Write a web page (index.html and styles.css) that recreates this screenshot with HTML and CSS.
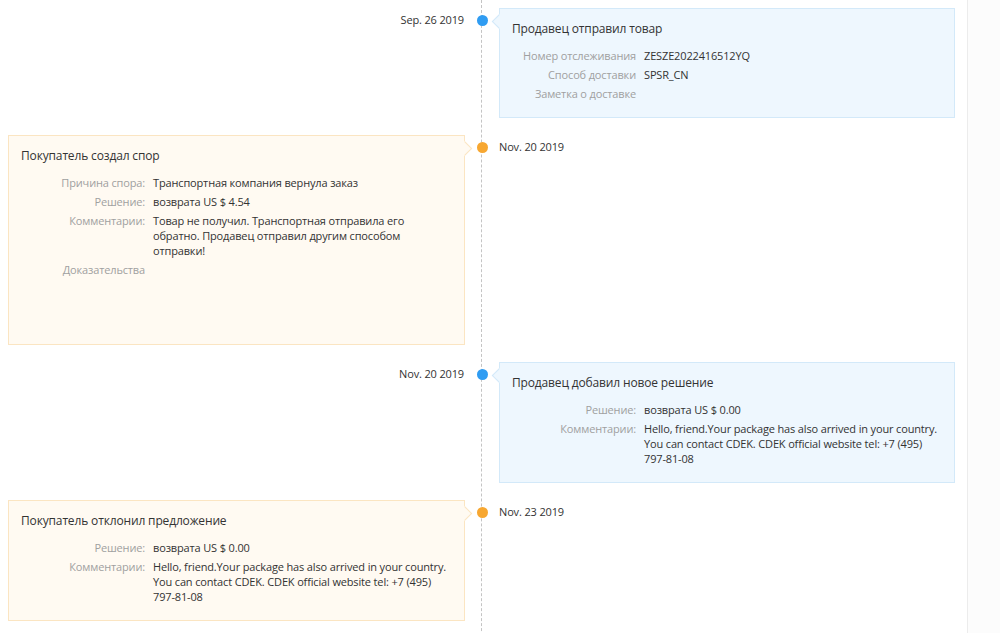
FILE: index.html
```html
<!doctype html>
<html lang="ru">
<head>
    <meta charset="UTF-8">
    <meta name="viewport" content="width=device-width, initial-scale=1.0">
    <title>Спор</title>
    <link rel="stylesheet" href="styles.css">
</head>
<body>
<div class="page">
    <div class="timeline">
        <div class="event seller">
            <div class="event-date date-left">Sep. 26 2019</div>
            <div class="event-axis"><span class="dot"></span></div>
            <div class="card card-right">
                <div class="card-title">Продавец отправил товар</div>
                <div class="row"><span class="label">Номер отслеживания</span><span class="value">ZESZE2022416512YQ</span></div>
                <div class="row"><span class="label">Способ доставки</span><span class="value">SPSR_CN</span></div>
                <div class="row"><span class="label">Заметка о доставке</span><span class="value"></span></div>
            </div>
        </div>

        <div class="event buyer">
            <div class="card card-left">
                <div class="card-title">Покупатель создал спор</div>
                <div class="row"><span class="label">Причина спора:</span><span class="value">Транспортная компания вернула заказ</span></div>
                <div class="row"><span class="label">Решение:</span><span class="value">возврата US $ 4.54</span></div>
                <div class="row"><span class="label">Комментарии:</span><span class="value">Товар не получил. Транспортная отправила его обратно. Продавец отправил другим способом отправки!</span></div>
                <div class="row"><span class="label">Доказательства</span><span class="value proof"></span></div>
            </div>
            <div class="event-axis"><span class="dot"></span></div>
            <div class="event-date">Nov. 20 2019</div>
        </div>

        <div class="event seller">
            <div class="event-date date-left">Nov. 20 2019</div>
            <div class="event-axis"><span class="dot"></span></div>
            <div class="card card-right">
                <div class="card-title">Продавец добавил новое решение</div>
                <div class="row"><span class="label">Решение:</span><span class="value">возврата US $ 0.00</span></div>
                <div class="row"><span class="label">Комментарии:</span><span class="value">Hello, friend.Your package has also arrived in your country. You can contact CDEK. CDEK official website tel: +7 (495) 797-81-08</span></div>
            </div>
        </div>

        <div class="event buyer">
            <div class="card card-left">
                <div class="card-title">Покупатель отклонил предложение</div>
                <div class="row"><span class="label">Решение:</span><span class="value">возврата US $ 0.00</span></div>
                <div class="row"><span class="label">Комментарии:</span><span class="value">Hello, friend.Your package has also arrived in your country. You can contact CDEK. CDEK official website tel: +7 (495) 797-81-08</span></div>
            </div>
            <div class="event-axis"><span class="dot"></span></div>
            <div class="event-date">Nov. 23 2019</div>
        </div>
    </div>
</div>
</body>
</html>
```

FILE: styles.css
```css
* {
    margin: 0;
    padding: 0;
    box-sizing: border-box;
}

html, body {
    height: 100%;
}

body {
    font-family: "Open Sans", "Noto Sans", sans-serif;
    font-size: 11px;
    letter-spacing: -0.15px;
    color: #333;
    background-color: #fcfcfc;
    overflow: hidden;
}

.page {
    width: 968px;
    min-height: 100%;
    background-color: #fff;
    border-right: 1px solid #ececec;
}

.timeline {
    position: relative;
    padding: 8px 0 40px 8px;
    display: flex;
    flex-direction: column;
    gap: 17px;
}

/* dashed axis */
.timeline::before {
    content: "";
    position: absolute;
    top: 0;
    bottom: 0;
    left: 481px;
    border-left: 1px dashed #c4c4c4;
}

.event {
    display: grid;
    grid-template-columns: 457px 34px 456px;
    align-items: start;
}

.event-axis {
    position: relative;
    height: 24px;
    z-index: 1;
}

.dot {
    display: block;
    width: 11px;
    height: 11px;
    border-radius: 50%;
    margin: 7px 0 0 12px;
}

.seller .dot {
    background-color: #2f9cf2;
}

.buyer .dot {
    background-color: #f7a731;
}

.event-date {
    line-height: 24px;
    white-space: nowrap;
}

.date-left {
    text-align: right;
    padding-right: 1px;
}

.card {
    position: relative;
    padding: 12px;
    border: 1px solid;
}

.seller .card {
    background-color: #eef7fe;
    border-color: #d3e9f9;
}

.buyer .card {
    background-color: #fffaf2;
    border-color: #fbe5c2;
}

/* little arrow to the dot */
.card::before {
    content: "";
    position: absolute;
    top: 7px;
    width: 9px;
    height: 9px;
    background: inherit;
    border: 1px solid;
    border-color: inherit;
    transform: rotate(45deg);
}

.card-right::before {
    left: -6px;
    border-top-color: transparent;
    border-right-color: transparent;
}

.card-left::before {
    right: -6px;
    border-bottom-color: transparent;
    border-left-color: transparent;
}

.card-title {
    font-size: 12px;
    line-height: 16px;
    margin-bottom: 11px;
}

.row {
    display: grid;
    grid-template-columns: 124px 1fr;
    gap: 8px;
    line-height: 15px;
    margin-bottom: 4px;
}

.label {
    color: #a0a0a0;
    text-align: right;
    white-space: nowrap;
}

.proof {
    min-height: 66px;
}
```
